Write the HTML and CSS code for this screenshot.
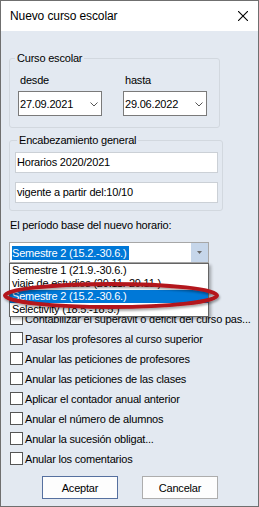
FILE: index.html
```html
<!DOCTYPE html>
<html lang="es">
<head>
  <meta charset="UTF-8">
  <title>Nuevo curso escolar</title>
  <link rel="stylesheet" href="styles.css">
</head>
<body>
  <div class="window">
    <div class="titlebar">
      <span class="title">Nuevo curso escolar</span>
      <svg class="close" width="10" height="10" viewBox="0 0 10 10"><path d="M0 0L10 10M10 0L0 10" stroke="#000" stroke-width="1.1"/></svg>
    </div>

    <div class="content">
      <fieldset class="group group-curso">
        <legend>Curso escolar</legend>
        <div class="dates">
          <div class="date-col">
            <label>desde</label>
            <div class="datebox"><span>27.09.2021</span><svg class="chev" width="8" height="5" viewBox="0 0 8 5"><path d="M0.5 0.5L4 4L7.5 0.5" stroke="#555" fill="none"/></svg></div>
          </div>
          <div class="date-col">
            <label>hasta</label>
            <div class="datebox"><span>29.06.2022</span><svg class="chev" width="8" height="5" viewBox="0 0 8 5"><path d="M0.5 0.5L4 4L7.5 0.5" stroke="#555" fill="none"/></svg></div>
          </div>
        </div>
      </fieldset>

      <fieldset class="group group-head">
        <legend>Encabezamiento general</legend>
        <div class="textbox">Horarios 2020/2021</div>
        <div class="textbox">vigente a partir del:10/10</div>
      </fieldset>

      <div class="period-label">El período base del nuevo horario:</div>

      <div class="combo-wrap">
        <div class="combo">
          <span class="combo-value">Semestre 2 (15.2.-30.6.)</span>
          <span class="combo-btn"><svg width="5" height="3" viewBox="0 0 5 3"><path d="M0 0H5L2.5 3Z" fill="#6a6a6a"/></svg></span>
        </div>
        <ul class="combo-list">
          <li>Semestre 1 (21.9.-30.6.)</li>
          <li>viaje de estudios (29.11.-29.11.)</li>
          <li class="selected">Semestre 2 (15.2.-30.6.)</li>
          <li>Selectivity (18.5.-18.5.)</li>
        </ul>
        <!-- red annotation ring -->
        <svg class="mark" width="232" height="36" viewBox="0 0 232 36">
          <defs>
            <filter id="shadow" x="-5%" y="-30%" width="110%" height="160%">
              <feDropShadow dx="1" dy="2" stdDeviation="1" flood-color="#000" flood-opacity="0.35"/>
            </filter>
          </defs>
          <ellipse cx="111" cy="17.5" rx="106" ry="11.5" fill="none" stroke="#b3151b" stroke-width="4" filter="url(#shadow)"/>
        </svg>
      </div>

      <ul class="checks">
        <li class="check"><span class="box"></span>Contabilizar el superávit o déficit del curso pas...</li>
        <li class="check"><span class="box"></span>Pasar los profesores al curso superior</li>
        <li class="check"><span class="box"></span>Anular las peticiones de profesores</li>
        <li class="check"><span class="box"></span>Anular las peticiones de las clases</li>
        <li class="check"><span class="box"></span>Aplicar el contador anual anterior</li>
        <li class="check"><span class="box"></span>Anular el número de alumnos</li>
        <li class="check"><span class="box"></span>Anular la sucesión obligat...</li>
        <li class="check"><span class="box"></span>Anular los comentarios</li>
      </ul>

      <div class="buttons">
        <button class="btn default">Aceptar</button>
        <button class="btn">Cancelar</button>
      </div>
    </div>
  </div>
</body>
</html>
```

FILE: styles.css
```css
* { box-sizing: border-box; }

body {
  margin: 0;
  font-family: "Liberation Sans", Arial, sans-serif;
  font-size: 11px;
  letter-spacing: -0.2px;
  color: #000;
}

.window {
  width: 259px; height: 507px;
  border: 1px solid #6f6f6f;
  background: #e3e9f1;
  display: flex; flex-direction: column;
  overflow: hidden;
}

/* Title bar */
.titlebar {
  height: 30px; flex: none;
  background: #fff;
  display: flex; align-items: center;
  padding: 0 10px 0 9px;
}
.title { flex: 1; font-size: 12px; letter-spacing: -0.1px; }
.close { display: block; }

.content { padding-left: 8px; }

/* Group boxes */
.group {
  margin: 0;
  border: 1px solid #d2d8df;
  border-radius: 3px;
}
.group legend { padding: 0 2px; line-height: 14px; }

.group-curso { margin-top: 20px; width: 211px; padding: 0 8px 11px; }
.group-curso legend { margin-left: -3px; }

.dates { display: flex; gap: 21px; margin-top: 8px; }
.date-col { width: 84px; }
.date-col label { display: block; padding-left: 2px; line-height: 14px; }
.datebox {
  margin-top: 4px; height: 25px;
  background: #fff; border: 1px solid #7a7a7a;
  display: flex; align-items: center;
  padding: 0 3px 0 1px;
}
.datebox .chev { margin-left: auto; margin-top: 1px; }

.group-head { margin-top: 5px; width: 214px; padding: 0 4px 7px 5px; }
.group-head legend { margin-left: 2px; }

.textbox {
  height: 21px;
  background: #fff; border: 1px solid #cbd0d6;
  padding-left: 1px; line-height: 19px;
  margin-top: 9px;
}
.group-head legend + .textbox { margin-top: 5px; }

.period-label { margin-top: 7px; line-height: 14px; padding-left: 1px; }

/* Combo box with open list */
.combo-wrap { position: relative; margin-top: 10px; width: 200px; }
.combo {
  height: 21px;
  background: #fff; border: 1px solid #a7a7a7;
  display: flex; align-items: center;
  padding-left: 2px;
}
.combo-value { background: #0078d7; color: #fff; line-height: 14px; padding-right: 3px; }
.combo-btn {
  margin-left: auto; width: 17px; height: 19px;
  background: #c6d6ea;
  display: flex; align-items: center; justify-content: center;
}
.combo-btn svg { display: block; }

.combo-list {
  position: absolute; top: 21px; left: 0; z-index: 2;
  width: 200px; margin: 0; padding: 0; list-style: none;
  background: #fff; border: 1px solid #646464;
  box-shadow: 2px 2px 3px rgba(0,0,0,0.3);
}
.combo-list li { height: 13px; line-height: 13px; padding-left: 2px; white-space: nowrap; }
.combo-list .selected { background: #0078d7; color: #fff; }

.mark { position: absolute; left: -9px; top: 36px; z-index: 3; }

/* Check boxes */
.checks {
  margin: 49px 0 0; padding: 0 0 0 1px; list-style: none;
  display: flex; flex-direction: column; gap: 7px;
}
.check { display: flex; align-items: center; gap: 2px; height: 13px; white-space: nowrap; }
.box { width: 13px; height: 13px; flex: none; background: #fff; border: 1px solid #555; }

/* Buttons */
.buttons { display: flex; gap: 24px; margin-top: 11px; padding-left: 33px; }
.btn {
  width: 76px; height: 23px; padding: 0;
  background: #fdfdfd; border: 1px solid #adadad;
  font: inherit; letter-spacing: inherit; color: #000;
}
.btn.default { border-color: #56709f; }
```
